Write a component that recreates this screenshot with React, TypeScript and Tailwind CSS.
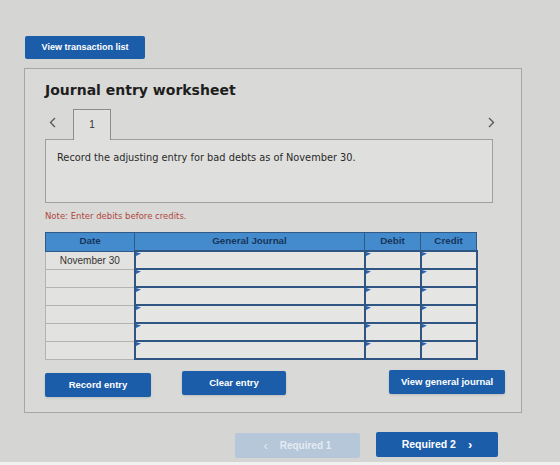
const rows = [0, 1, 2, 3, 4, 5];

function Flag() {
  return (
    <svg className="absolute left-0 top-0" width="5" height="5" viewBox="0 0 5 5">
      <polygon points="0,0 5,1.5 0,4" fill="#2a63b0" />
    </svg>
  );
}

function Chevron({ dir }: { dir: 'left' | 'right' }) {
  return (
    <svg width="7" height="11" viewBox="0 0 7 11" className="mb-[11px]">
      <polyline
        points={dir === 'left' ? '6,1 1.5,5.5 6,10' : '1,1 5.5,5.5 1,10'}
        fill="none"
        stroke="#5a5a5a"
        strokeWidth="1.4"
      />
    </svg>
  );
}

function BlueButton({ label, className }: { label: string; className: string }) {
  return (
    <button
      className={`bg-[#1b5da9] text-white text-[9.5px] font-bold rounded-[2px] shadow-sm ${className}`}
    >
      {label}
    </button>
  );
}

export default function App() {
  return (
    <div className="w-[560px] h-[465px] bg-[#d5d5d3] flex flex-col font-['Liberation_Sans',Arial,sans-serif] overflow-hidden">
      <button className="ml-[25px] mt-[36px] w-[120px] h-[23px] bg-[#1b5da9] text-white text-[9px] font-bold rounded-[2px] self-start">
        View transaction list
      </button>

      {/* Worksheet panel */}
      <div className="ml-[24px] mt-[9px] w-[498px] h-[345px] border border-[#a6a6a4] bg-[#d9d9d7] pl-[20px] flex flex-col">
        <h2 className="mt-[11px] text-[14px] leading-[20px] font-bold text-[#1e1e1e] font-['DejaVu_Sans',Verdana,sans-serif]">
          Journal entry worksheet
        </h2>

        <div className="mt-[8px] flex items-end h-[31px] w-[448px] relative">
          <span className="ml-[4px]">
            <Chevron dir="left" />
          </span>
          <div className="ml-[17px] w-[38px] h-[31px] border border-b-0 border-[#8c8c8a] bg-[#dfdfdd] flex justify-center pt-[7px] text-[10px] text-[#333] relative top-[1px] z-10">
            1
          </div>
          <span className="ml-auto mr-[-2px]">
            <Chevron dir="right" />
          </span>
        </div>

        <div className="w-[448px] h-[64px] border border-[#9f9f9d] bg-[#dfdfdd] pl-[11px] pt-[11px] text-[9.8px] text-[#2a2a2a] font-['DejaVu_Sans',Verdana,sans-serif]">
          Record the adjusting entry for bad debts as of November 30.
        </div>

        <p className="mt-[7px] text-[8.5px] text-[#b0473f] font-['DejaVu_Sans',Verdana,sans-serif]">
          Note: Enter debits before credits.
        </p>

        <table className="mt-[9px] w-[431px] table-fixed border-collapse">
          <colgroup>
            <col className="w-[89px]" />
            <col className="w-[230px]" />
            <col className="w-[56px]" />
            <col className="w-[56px]" />
          </colgroup>
          <thead>
            <tr className="h-[19px]">
              {['Date', 'General Journal', 'Debit', 'Credit'].map((h) => (
                <th
                  key={h}
                  className="bg-[#448bcd] border border-[#2f5a88] text-[9.8px] font-bold text-[#17355a] p-0"
                >
                  {h}
                </th>
              ))}
            </tr>
          </thead>
          <tbody>
            {rows.map((r) => (
              <tr key={r} className="h-[18px]">
                <td className="border border-[#b3b3b1] bg-[#e2e2e0] text-center text-[10px] text-[#333] p-0">
                  {r === 0 ? 'November 30' : ''}
                </td>
                {[0, 1, 2].map((c) => (
                  <td key={c} className="relative border-2 border-[#2f5682] bg-[#e5e5e3] p-0">
                    <Flag />
                  </td>
                ))}
              </tr>
            ))}
          </tbody>
        </table>

        <div className="mt-[10px] flex items-start w-[460px]">
          <BlueButton label="Record entry" className="mt-[3px] w-[106px] h-[24px]" />
          <BlueButton label="Clear entry" className="ml-[31px] mt-[1px] w-[104px] h-[24px]" />
          <BlueButton label="View general journal" className="ml-auto w-[116px] h-[24px]" />
        </div>
      </div>

      {/* Part navigation */}
      <div className="mt-[19px] ml-[235px] flex items-start">
        <button className="mt-[1px] w-[125px] h-[25px] bg-[#b6c7da] text-[#e4ebf3] text-[10px] font-bold rounded-[2px] flex items-center justify-center gap-[12px]">
          <span className="text-[12px] font-normal">‹</span>
          <span>Required 1</span>
        </button>
        <button className="ml-[16px] w-[122px] h-[25px] bg-[#1b5da9] text-white text-[10.5px] font-bold rounded-[2px] flex items-center justify-center gap-[12px]">
          <span>Required 2</span>
          <span className="text-[13px]">›</span>
        </button>
      </div>

      <div className="mt-auto h-[3px] bg-[#f1f1ef]" />
    </div>
  );
}
